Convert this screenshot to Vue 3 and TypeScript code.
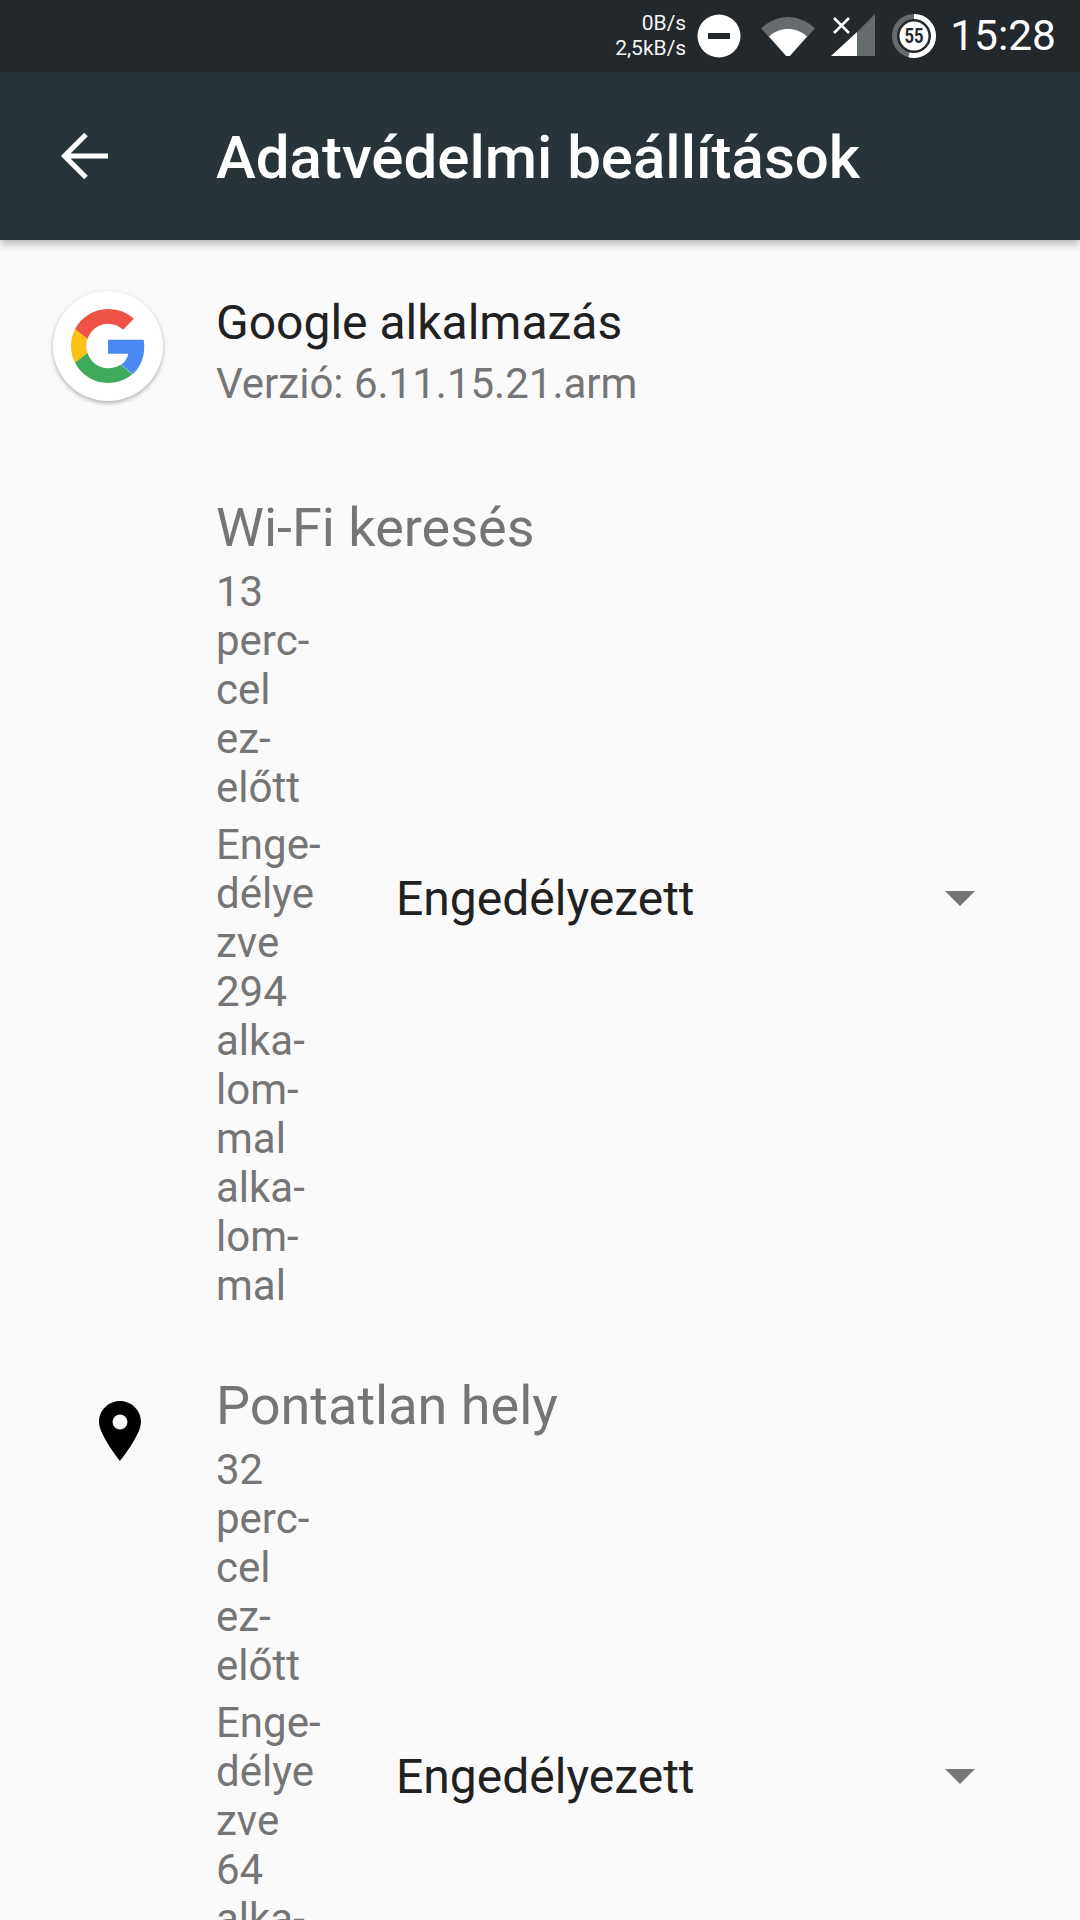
<template>
  <div class="screen">
    <div class="status-bar">
      <div class="speed">
        <span>0B/s</span>
        <span>2,5kB/s</span>
      </div>
      <svg class="ic-dnd" viewBox="0 0 44 44">
        <circle cx="22" cy="22" r="21.5" fill="#fff" />
        <rect x="11" y="19" width="22" height="6" fill="#22282c" />
      </svg>
      <svg class="ic-wifi" viewBox="0 0 54 40">
        <path d="M0 12.5C8 5 17 1 27 1s19 4 27 11.5L27 42z" fill="#666b6d" />
        <path d="M8 20.5C13.500 15.500 20 13 27 13s13.500 2.500 19 7.500L27 42z" fill="#fff" />
      </svg>
      <svg class="ic-signal" viewBox="0 0 44 44">
        <path d="M44 0v42H26V18z" fill="#666b6d" />
        <path d="M26 18v24H0z" fill="#fff" />
        <path d="M3 4l15 15M18 4L3 19" stroke="#fff" stroke-width="2.600" fill="none" />
      </svg>
      <svg class="ic-battery" viewBox="0 0 46 46">
        <circle cx="23" cy="23" r="19.500" fill="none" stroke="#666b6d" stroke-width="5" />
        <path d="M23 3.500a19.500 19.500 0 0 1 0 39 19.500 19.500 0 0 1-5-.6" fill="none" stroke="#fff" stroke-width="5" />
        <circle cx="23" cy="23" r="14.500" fill="#fff" />
        <text x="23" y="30" text-anchor="middle" textLength="19" lengthAdjust="spacingAndGlyphs" class="battery-text">55</text>
      </svg>
      <span class="clock">15:28</span>
    </div>

    <header class="app-bar">
      <svg class="back" viewBox="0 0 48 48">
        <path d="M48 24H5M26 2.500L4.500 24 26 45.500" fill="none" stroke="#fff" stroke-width="5" />
      </svg>
      <h1 class="title">Adatvédelmi beállítások</h1>
    </header>

    <main class="content">
      <section class="app-row">
        <div class="icon-col">
          <div class="logo">
            <svg viewBox="0 0 48 48" class="g-mark">
              <path fill="#ef5345" d="M24 9.500c3.900 0 7.100 1.300 9.800 3.900l7-7C36.500 2.400 30.800 0 24 0 14.600 0 6.500 5.400 2.600 13.200l8.100 6.300C12.600 13.600 17.800 9.500 24 9.500z" />
              <path fill="#4a89f3" d="M47.500 24.500c0-1.600-.1-3.100-.4-4.500H24v9h13.200c-.6 3-2.300 5.500-4.800 7.200l7.800 6c4.500-4.200 7.300-10.300 7.300-17.700z" />
              <path fill="#fbc116" d="M10.700 28.500C10.200 27.100 9.900 25.600 9.900 24s.3-3.100.8-4.500l-8.100-6.300C.9 16.400 0 20.100 0 24s.9 7.600 2.600 10.800z" />
              <path fill="#3eab5c" d="M24 48c6.500 0 11.900-2.100 15.900-5.800l-7.800-6c-2.200 1.400-4.900 2.300-8.100 2.300-6.200 0-11.400-4.200-13.300-9.900l-8.100 6.300C6.500 42.600 14.600 48 24 48z" />
            </svg>
          </div>
        </div>
        <div class="app-text">
          <div class="app-name">Google alkalmazás</div>
          <div class="app-version">Verzió: 6.11.15.21.arm</div>
        </div>
      </section>

      <section v-for="item in permissions" :key="item.title" class="perm">
        <div class="icon-col">
          <svg v-if="item.pin" class="pin" viewBox="0 0 42 60">
            <path fill-rule="evenodd" d="M21 0C9.400 0 0 9.400 0 21c0 13 21 39 21 39s21-26 21-39C42 9.400 32.600 0 21 0zm0 28.500a7.500 7.500 0 1 1 0-15 7.500 7.500 0 0 1 0 15z" />
          </svg>
        </div>
        <div class="perm-body">
          <div class="perm-title">{{ item.title }}</div>
          <div class="perm-main">
            <div class="perm-notes">
              <div class="note">
                <div v-for="line in item.when" :key="line">{{ line }}</div>
              </div>
              <div class="note">
                <div v-for="(line, i) in item.count" :key="i">{{ line }}</div>
              </div>
            </div>
            <div class="spinner">
              <span>Engedélyezett</span>
              <i class="caret"></i>
            </div>
          </div>
        </div>
      </section>
    </main>
  </div>
</template>

<script setup lang="ts">
interface Permission {
  title: string;
  pin: boolean;
  when: string[];
  count: string[];
}

const when = (n: string) => [n, "perc-", "cel", "ez-", "előtt"];
const count = (n: string) => [
  "Enge-",
  "délye",
  "zve",
  n,
  "alka-",
  "lom-",
  "mal",
  "alka-",
  "lom-",
  "mal",
];

const permissions: Permission[] = [
  { title: "Wi-Fi keresés", pin: false, when: when("13"), count: count("294") },
  { title: "Pontatlan hely", pin: true, when: when("32"), count: count("64") },
];
</script>

<style>
html,
body {
  margin: 0;
  background: #fafafa;
}
</style>

<style scoped>
.screen {
  width: 1080px;
  height: 1920px;
  overflow: hidden;
  background: #fafafa;
  font-family: Roboto, "Liberation Sans", sans-serif;
}
.status-bar {
  height: 72px;
  box-sizing: border-box;
  background: #22282c;
  display: flex;
  align-items: center;
  justify-content: flex-end;
  padding-right: 24px;
  color: #fff;
}
.speed {
  display: flex;
  flex-direction: column;
  align-items: flex-end;
  font-size: 21px;
  line-height: 25px;
  color: #f4f4f4;
  margin-right: 11px;
}
.ic-dnd {
  width: 44px;
  height: 44px;
  margin-right: 20px;
}
.ic-wifi {
  width: 54px;
  height: 40px;
  margin-right: 16px;
}
.ic-signal {
  width: 44px;
  height: 44px;
  margin-right: 16px;
}
.ic-battery {
  width: 46px;
  height: 46px;
  margin-right: 13px;
}
.battery-text {
  font-family: Roboto, sans-serif;
  font-size: 20px;
  font-weight: 700;
  fill: #22282c;
}
.clock {
  font-size: 42.5px;
  line-height: 48px;
}
.app-bar {
  height: 168px;
  background: #29343a;
  display: flex;
  align-items: center;
  box-shadow: 0 4px 8px rgba(0, 0, 0, 0.28);
  position: relative;
}
.back {
  width: 48px;
  height: 48px;
  margin-left: 60px;
  margin-right: 108px;
}
.title {
  margin: 0;
  padding-top: 2px;
  font-size: 60px;
  font-weight: 500;
  color: #fff;
}
.content {
  display: flex;
  flex-direction: column;
}
.icon-col {
  width: 216px;
  flex: none;
}
.app-row {
  display: flex;
  height: 249px;
  box-sizing: border-box;
  padding-top: 51px;
}
.logo {
  width: 110px;
  height: 110px;
  margin-left: 53px;
  border-radius: 50%;
  background: #fff;
  box-shadow: 0 2px 4px rgba(0, 0, 0, 0.3);
  display: flex;
  align-items: center;
  justify-content: center;
}
.g-mark {
  width: 74px;
  height: 74px;
}
.app-text {
  padding-top: 2px;
}
.app-name {
  font-size: 48px;
  line-height: 60px;
  color: #212121;
}
.app-version {
  margin-top: 1px;
  font-size: 42px;
  line-height: 60px;
  color: #757575;
}
.perm {
  display: flex;
  margin-bottom: 57px;
}
.perm-body {
  flex: 1;
  min-width: 0;
}
.perm-title {
  font-size: 54px;
  line-height: 78px;
  color: #757575;
}
.perm-main {
  display: flex;
  align-items: center;
}
.perm-notes {
  width: 180px;
  flex: none;
  font-size: 42px;
  line-height: 49px;
  color: #757575;
}
.note + .note {
  margin-top: 8px;
}
.spinner {
  width: 579px;
  box-sizing: border-box;
  padding-bottom: 80px;
  display: flex;
  align-items: center;
  justify-content: space-between;
  font-size: 48px;
  color: #212121;
}
.caret {
  width: 0;
  height: 0;
  border-left: 15px solid transparent;
  border-right: 15px solid transparent;
  border-top: 15px solid #757575;
}
.pin {
  display: block;
  width: 42px;
  height: 60px;
  margin-left: 99px;
  margin-top: 34px;
}
</style>
